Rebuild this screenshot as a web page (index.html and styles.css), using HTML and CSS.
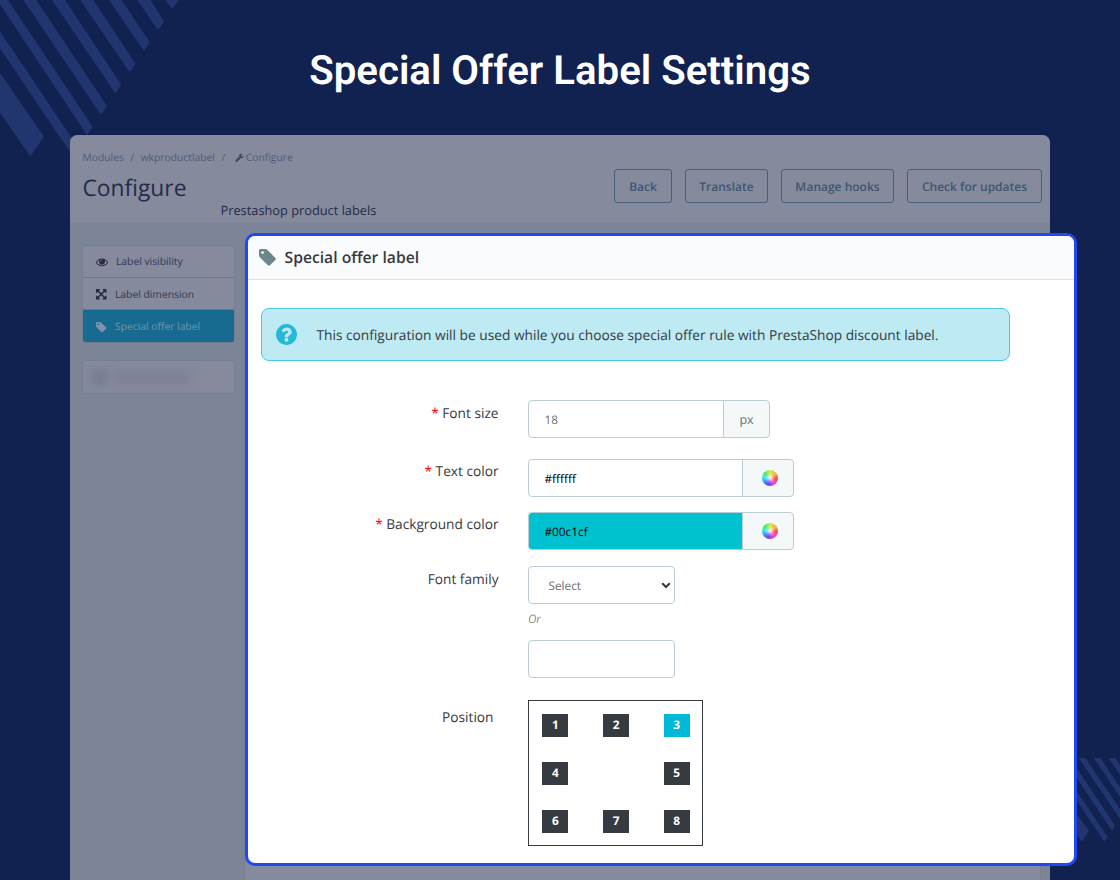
FILE: index.html
```html
<!DOCTYPE html>
<html lang="en">
	<head>
		<meta charset="UTF-8" />
		<meta name="viewport" content="width=device-width, initial-scale=1.0" />
		<title>Special Offer Label Settings</title>
		<link rel="stylesheet" href="styles.css">
	</head>
	<body>
		<svg class="stripes stripes-top" viewBox="0 0 540 480">
			<path d="M0 219L132 410 91 469 0 338z" />
			<path d="M0 94L235 443 218 468 0 145z" />
			<path d="M0 0H24L278 380 261 406 0 13z" />
			<path d="M70 0H109L321 318 303 344z" />
			<path d="M156 0H195L364 254 346 280z" />
			<path d="M241 0H280L406 191 389 217z" />
			<path d="M327 0H365L449 127 432 153z" />
			<path d="M412 0H451L492 64 474 91z" />
			<path d="M497 0H536L517 27z" />
		</svg>
		<svg class="stripes stripes-bottom" viewBox="0 0 150 252">
			<path d="M0 140L57 218 35 251 0 200z" />
			<path d="M0 70L113 237 103 251 0 98z" />
			<path d="M0 0L136 203 126 218 0 30z" />
			<path d="M26 0H46L150 153V183z" />
			<path d="M71 0H91L150 88V117z" />
			<path d="M116 0H136L150 21V50z" />
		</svg>

		<h1 class="title">Special Offer Label Settings</h1>

		<div class="window">
			<header class="toolbar">
				<div class="toolbar-left">
					<div class="breadcrumb">
						<span>Modules</span>
						<i>/</i>
						<span>wkproductlabel</span>
						<i>/</i>
						<svg viewBox="0 0 1792 1792"><path d="M448 1472q0-26-19-45t-45-19-45 19-19 45 19 45 45 19 45-19 19-45zm644-420l-682 682q-37 37-90 37-52 0-91-37l-106-108q-38-36-38-90 0-53 38-91l681-681q39 98 114.5 173.5t173.5 114.5zm634-435q0 39-23 106-47 134-164.5 217.5t-258.5 83.5q-185 0-316.5-131.5t-131.5-316.5 131.5-316.5 316.5-131.5q58 0 121.5 16.5t107.5 46.5q16 11 16 28t-16 28l-293 169v224l193 107q5-3 79-48.5t135.5-81 70.5-35.5q15 0 23.5 10t8.5 25z" /></svg>
						<span>Configure</span>
					</div>
					<h2>Configure</h2>
					<p>Prestashop product labels</p>
				</div>
				<div class="toolbar-buttons">
					<button class="btn-back">Back</button>
					<button class="btn-translate">Translate</button>
					<button class="btn-hooks">Manage hooks</button>
					<button class="btn-updates">Check for updates</button>
				</div>
			</header>
			<div class="content">
				<nav class="sidebar">
					<div class="menu">
						<a class="menu-item first">
							<svg viewBox="0 0 1792 1792"><path d="M1664 960q-152-236-381-353 61 104 61 225 0 185-131.5 316.5t-316.5 131.5-316.5-131.5-131.5-316.5q0-121 61-225-229 117-381 353 133 205 333.5 326.5t434.5 121.5 434.5-121.5 333.5-326.5zm-720-384q0-20-14-34t-34-14q-125 0-214.5 89.5t-89.5 214.5q0 20 14 34t34 14 34-14 14-34q0-86 61-147t147-61q20 0 34-14t14-34zm848 384q0 34-20 69-140 230-376.5 368.5t-499.5 138.5-499.5-139-376.5-368q-20-35-20-69t20-69q140-229 376.5-368t499.5-139 499.5 139 376.5 368q20 35 20 69z" /></svg>
							Label visibility
						</a>
						<a class="menu-item">
							<svg viewBox="128 128 1536 1536"><path d="M1411 541l-355 355 355 355 144-144q29-31 70-14 39 17 39 59v448q0 26-19 45t-45 19h-448q-42 0-59-40-17-39 14-69l144-144-355-355-355 355 144 144q31 30 14 69-17 40-59 40h-448q-26 0-45-19t-19-45v-448q0-42 40-59 39-17 69 14l144 144 355-355-355-355-144 144q-19 19-45 19-12 0-24-5-40-17-40-59v-448q0-26 19-45t45-19h448q42 0 59 40 17 39-14 69l-144 144 355 355 355-355-144-144q-31-30-14-69 17-40 59-40h448q26 0 45 19t19 45v448q0 42-39 59-13 5-25 5-26 0-45-19z" /></svg>
							Label dimension
						</a>
						<a class="menu-item active">
							<svg viewBox="128 128 1536 1536"><path d="M576 448q0-53-37.5-90.5t-90.5-37.5-90.5 37.5-37.5 90.5 37.5 90.5 90.5 37.5 90.5-37.5 37.5-90.5zm1067 576q0 53-37 90l-491 492q-39 37-91 37-53 0-90-37l-715-716q-38-37-64.5-101t-26.5-117v-416q0-52 38-90t90-38h416q53 0 117 26.5t102 64.5l715 714q37 39 37 91z" /></svg>
							Special offer label
						</a>
					</div>
					<div class="hidden-item">
						<span class="smudge-icon"></span>
						<span class="smudge-text"></span>
					</div>
				</nav>
				<div class="panel"></div>
			</div>
		</div>

		<section class="modal">
			<header class="modal-header">
				<svg viewBox="128 128 1536 1536"><path d="M576 448q0-53-37.5-90.5t-90.5-37.5-90.5 37.5-37.5 90.5 37.5 90.5 90.5 37.5 90.5-37.5 37.5-90.5zm1067 576q0 53-37 90l-491 492q-39 37-91 37-53 0-90-37l-715-716q-38-37-64.5-101t-26.5-117v-416q0-52 38-90t90-38h416q53 0 117 26.5t102 64.5l715 714q37 39 37 91z" /></svg>
				<h3>Special offer label</h3>
			</header>

			<div class="alert">
				<svg viewBox="128 128 1536 1536"><path d="M1024 1376v-192q0-14-9-23t-23-9h-192q-14 0-23 9t-9 23v192q0 14 9 23t23 9h192q14 0 23-9t9-23zm256-672q0-88-55.5-163t-138.5-116-170-41q-243 0-371 213-15 24 8 42l132 100q7 6 19 6 16 0 25-12 53-68 86-92 34-24 86-24 48 0 85.5 26t37.5 59q0 38-20 61t-68 45q-63 28-115.5 86.5t-52.5 125.5v36q0 14 9 23t23 9h192q14 0 23-9t9-23q0-19 21.5-49.5t54.5-49.5q32-18 49-28.5t46-35 44.5-48 28-60.5 12.5-81zm384 192q0 209-103 385.5t-279.5 279.5-385.5 103-385.5-103-279.5-279.5-103-385.5 103-385.5 279.5-279.5 385.5-103 385.5 103 279.5 279.5 103 385.5z" /></svg>
				<span>This configuration will be used while you choose special offer rule with PrestaShop discount label.</span>
			</div>

			<form class="form">
				<div class="row row-size">
					<label><b>*</b> Font size</label>
					<div class="group group-size">
						<input type="text" value="18" />
						<span class="addon">px</span>
					</div>
				</div>
				<div class="row row-text">
					<label><b>*</b> Text color</label>
					<div class="group group-color">
						<input type="text" value="#ffffff" />
						<span class="addon"><span class="wheel"></span></span>
					</div>
				</div>
				<div class="row row-bg">
					<label><b>*</b> Background color</label>
					<div class="group group-color">
						<input class="bg-input" type="text" value="#00c1cf" />
						<span class="addon"><span class="wheel"></span></span>
					</div>
				</div>
				<div class="row row-family">
					<label>Font family</label>
					<div class="family">
						<div class="select">
							<span>Select</span>
							<svg viewBox="0 0 10 7"><path d="M1.2 1.2L5 5 8.8 1.2" /></svg>
						</div>
						<em>Or</em>
						<input type="text" />
					</div>
				</div>
				<div class="row row-position">
					<label>Position</label>
					<div class="positions">
						<span>1</span>
						<span>2</span>
						<span class="selected">3</span>
						<span>4</span>
						<span class="right">5</span>
						<span>6</span>
						<span>7</span>
						<span>8</span>
					</div>
				</div>
			</form>
		</section>
	</body>
</html>
```
FILE: styles.css
```css
* {
	box-sizing: border-box;
}
body {
	position: relative;
	margin: 0;
	width: 1120px;
	height: 880px;
	overflow: hidden;
	background: #112150;
	font-family: 'Open Sans', 'Noto Sans', sans-serif;
	color: #363a41;
	text-rendering: geometricPrecision;
}
h1,
h2,
h3,
p {
	margin: 0;
}
svg {
	display: block;
	flex: none;
	fill: currentColor;
}
button,
input {
	text-rendering: inherit;
}

/* background decoration */
.stripes {
	position: absolute;
	color: #21366f;
}
.stripes-top {
	top: 0;
	left: 0;
	width: 180px;
	height: 160px;
}
.stripes-bottom {
	right: 0;
	top: 758px;
	width: 50px;
	height: 84px;
}

.title {
	height: 135px;
	padding-top: 47px;
	font-family: Roboto, sans-serif;
	font-size: 40.2px;
	font-weight: 600;
	line-height: 48px;
	text-align: center;
	color: #fff;
}

/* dimmed admin page */
.window {
	position: relative;
	display: flex;
	flex-direction: column;
	width: 980px;
	height: 745px;
	margin-left: 70px;
	border-radius: 8px 8px 0 0;
	overflow: hidden;
	background: #7c8497;
}
.toolbar {
	display: flex;
	justify-content: space-between;
	height: 88px;
	padding: 15px 8px 0 12.5px;
	background: #858a9d;
	border-bottom: 1px solid #7f8699;
}
.breadcrumb {
	display: flex;
	align-items: center;
	height: 15px;
	font-size: 10.3px;
	color: #525b75;
}
.breadcrumb i {
	margin: 0 6.5px;
	font-style: normal;
	color: #3f6a5c;
}
.breadcrumb svg {
	width: 9px;
	height: 9px;
	margin: 0 2px 0 3px;
	color: #38415d;
}
.toolbar h2 {
	margin-top: 6px;
	font-size: 22.8px;
	font-weight: 400;
	line-height: 34px;
	color: #232d4a;
}
.toolbar p {
	margin: -4px 0 0 138px;
	font-size: 12.8px;
	line-height: 18px;
	color: #232d4a;
}
.toolbar-buttons {
	display: flex;
	gap: 13px;
	padding-top: 19px;
}
.toolbar-buttons button {
	height: 34px;
	padding: 0;
	border: 1px solid #48607c;
	border-radius: 3px;
	background: none;
	font: 600 12px 'Open Sans', sans-serif;
	color: #40556f;
}
.btn-back {
	width: 58px;
}
.btn-translate {
	width: 83px;
}
.btn-hooks {
	width: 113px;
}
.btn-updates {
	width: 135px;
}
.content {
	display: flex;
	flex: 1;
	padding: 22px 9px 0 12px;
}
.sidebar {
	width: 153px;
	margin-right: 9px;
}
.menu {
	border: 1px solid #777e92;
	border-radius: 3px;
	overflow: hidden;
	background: #858a9d;
}
.menu-item {
	display: flex;
	align-items: center;
	height: 32px;
	padding: 2px 0 0 13px;
	border-bottom: 1px solid #6f778c;
	font-size: 10.3px;
	color: #2f3854;
}
.menu-item svg {
	width: 10.5px;
	height: 10.5px;
	margin-right: 8.5px;
	color: #232b45;
}
.menu-item.first {
	padding-top: 0;
}
.menu-item.first svg {
	width: 12px;
	height: 12px;
	margin-right: 8px;
}
.menu-item.active {
	height: 33px;
	margin: 0 -1px -1px;
	padding: 1px 0 0 14px;
	border: 0;
	background: #176b90;
	color: #6f95ae;
}
.menu-item.active svg {
	color: #8193ab;
}
.hidden-item {
	display: flex;
	align-items: center;
	gap: 8px;
	height: 34px;
	margin-top: 17px;
	padding-left: 8px;
	border: 1px solid #777e92;
	border-radius: 3px;
	background: #858a9d;
}
.smudge-icon,
.smudge-text {
	width: 16px;
	height: 16px;
	background: #767c91;
	filter: blur(4px);
}
.smudge-text {
	width: 74px;
	height: 12px;
	background: #7b8095;
}
.panel {
	flex: 1;
	border: 1px solid #777e92;
	border-bottom: 0;
	background: #858a9d;
}

/* highlighted settings card */
.modal {
	position: absolute;
	top: 233px;
	left: 245px;
	width: 832px;
	height: 633px;
	border: 3px solid #2148f3;
	border-radius: 10px;
	background: #fff;
}
.modal-header {
	display: flex;
	align-items: center;
	height: 44px;
	padding-left: 11px;
	border-bottom: 1px solid #d8e2e8;
	border-radius: 7px 7px 0 0;
	background: #fafbfd;
}
.modal-header svg {
	width: 17px;
	height: 17px;
	color: #6c868e;
}
.modal-header h3 {
	margin: 0 0 1px 8.5px;
	font-size: 15.7px;
	font-weight: 600;
	line-height: 22px;
}
.alert {
	display: flex;
	align-items: center;
	width: 749px;
	height: 53px;
	margin: 28px 0 0 13px;
	padding-left: 14px;
	border: 1px solid #4ac7e0;
	border-radius: 8px;
	background: #beeaf3;
	font-size: 13.72px;
}
.alert svg {
	width: 21px;
	height: 21px;
	margin-right: 19.5px;
	color: #25b9d7;
}
.alert span {
	padding-top: 1px;
}
.form {
	padding: 39px 0 0 13px;
}
.row {
	display: grid;
	grid-template-columns: 237.5px 1fr;
	column-gap: 29.5px;
	align-items: start;
}
.row label {
	padding-top: 4px;
	font-size: 13.7px;
	line-height: 18px;
	text-align: right;
}
.row label b {
	font-weight: 400;
	color: #f00;
}
.row-size {
	height: 59px;
}
.row-size label,
.row-family label {
	padding-top: 5px;
}
.row-text {
	height: 53px;
}
.row-bg {
	height: 54px;
}
.row-family {
	height: 134px;
}
.row-position label {
	padding: 9px 5px 0 0;
}
.group {
	display: flex;
	height: 38px;
}
.group-size {
	width: 242px;
}
.group-color {
	width: 266px;
}
.form input,
.select {
	height: 38px;
	padding: 1px 15.5px 0;
	border: 1px solid #bbcdd2;
	border-radius: 4px;
	background: #fff;
	font: 11.8px 'Open Sans', sans-serif;
	color: #000;
}
.group input {
	flex: 1;
	min-width: 0;
	border-radius: 4px 0 0 4px;
}
.group-size input {
	color: #6c6e72;
}
.form .bg-input {
	background: #00c1cf;
}
.addon {
	display: flex;
	align-items: center;
	justify-content: center;
	width: 47px;
	margin-left: -1px;
	border: 1px solid #bbcdd2;
	border-radius: 0 4px 4px 0;
	background: #f4f8f9;
	font-size: 12.5px;
	color: #6c6e72;
}
.group-color .addon {
	width: 52px;
}
.wheel {
	width: 16px;
	height: 16px;
	margin-left: 3px;
	border-radius: 50%;
	background: radial-gradient(circle, #fff 0%, rgba(255, 255, 255, 0.3) 30%, transparent 50%), conic-gradient(#c8f04a, #ffb040 55deg, #f24a50 95deg, #f04ad8 145deg, #7040f0 195deg, #4090f8 235deg, #38ecec 275deg, #4ce870 315deg, #c8f04a);
}
.family {
	display: flex;
	flex-direction: column;
	width: 147px;
}
.select {
	display: flex;
	align-items: center;
	justify-content: space-between;
	padding: 1px 3px 0 19.5px;
	color: #6c6e72;
}
.select svg {
	width: 10px;
	height: 7px;
	fill: none;
	stroke: #363a41;
	stroke-width: 2;
}
.family em {
	height: 36px;
	padding-top: 7px;
	font-size: 11.6px;
	line-height: 17px;
	color: #8a8c90;
}
.positions {
	display: grid;
	grid-template-columns: repeat(3, 26px);
	grid-template-rows: repeat(3, 23px);
	justify-content: space-between;
	align-content: space-between;
	width: 175px;
	height: 146px;
	padding: 13px 12.4px 12.5px 13.4px;
	border: 1px solid #363a41;
}
.positions span {
	display: flex;
	align-items: center;
	justify-content: center;
	padding-bottom: 1px;
	background: #363a41;
	font-size: 11.8px;
	font-weight: 700;
	color: #fff;
}
.positions .selected {
	background: #00b9d6;
}
.positions .right {
	grid-column: 3;
}
```
